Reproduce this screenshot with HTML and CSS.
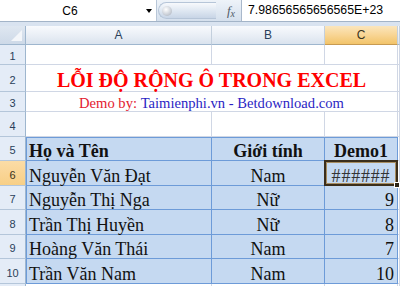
FILE: index.html
```
<!DOCTYPE html>
<html lang="vi">
<head>
<meta charset="utf-8">
<title>Excel</title>
<link rel="stylesheet" href="styles.css">
</head>
<body>
<div class="app">
  <div class="fbar">
    <div class="namebox"><span class="nb-text">C6</span><span class="nb-arrow"></span></div>
    <div class="fmid"><div class="pill"><span class="knob"></span></div><span class="fx"><i>f</i><span class="fxx">x</span></span></div>
    <div class="finput">7.98656565656565E+23</div>
  </div>
  <div class="band"></div>
  <div class="sheet">
    <div class="corner"><svg width="26" height="19" viewBox="0 0 26 19"><polygon points="22,4 22,15 11,15" fill="#f3f6fa"/></svg></div>
    <div class="ch">A</div><div class="ch">B</div><div class="ch on">C</div><div class="ch"></div>

    <div class="rh">1</div><div class="c"></div><div class="c"></div><div class="c"></div><div class="c"></div>

    <div class="rh">2</div><div class="c title">LỖI ĐỘ RỘNG Ô TRONG EXCEL</div><div class="c"></div>

    <div class="rh">3</div><div class="c sub"><span class="red">Demo by:</span>&nbsp;<span class="blue">Taimienphi.vn - Betdownload.com</span></div><div class="c"></div>

    <div class="rh">4</div><div class="c"></div><div class="c"></div><div class="c"></div><div class="c"></div>

    <div class="rh">5</div><div class="t top first b">Họ và Tên</div><div class="t top b mid">Giới tính</div><div class="t top b mid">Demo1</div><div class="c"></div>

    <div class="rh on">6</div><div class="t first">Nguyễn Văn Đạt</div><div class="t mid">Nam</div><div class="t mid active">######<span class="sel"><span class="handle"></span></span></div><div class="c"></div>

    <div class="rh">7</div><div class="t first">Nguyễn Thị Nga</div><div class="t mid">Nữ</div><div class="t num">9</div><div class="c"></div>

    <div class="rh">8</div><div class="t first">Trần Thị Huyền</div><div class="t mid">Nữ</div><div class="t num">8</div><div class="c"></div>

    <div class="rh">9</div><div class="t first">Hoàng Văn Thái</div><div class="t mid">Nam</div><div class="t num">7</div><div class="c"></div>

    <div class="rh">10</div><div class="t first">Trần Văn Nam</div><div class="t mid">Nam</div><div class="t num">10</div><div class="c"></div>

    <div class="rh"></div><div class="c"></div><div class="c"></div><div class="c"></div><div class="c"></div>
  </div>
</div>
</body>
</html>
```
FILE: styles.css
```
* { box-sizing: border-box; }
html, body { margin: 0; padding: 0; }
body { width: 400px; height: 286px; overflow: hidden; background: #fff; }
.app { width: 400px; height: 286px; overflow: hidden; }

.fbar {
  display: flex;
  height: 22px;
  border-bottom: 1px solid #a3b4c8;
  background: linear-gradient(#eef3f9, #d5e0ed);
}
.namebox {
  width: 157px;
  display: flex;
  align-items: center;
  background: #fff;
  border-right: 1px solid #b9c7d8;
}
.nb-text {
  width: 140px;
  text-align: center;
  font: 12px "Liberation Sans", Arial, sans-serif;
  color: #000;
}
.nb-arrow {
  width: 0; height: 0;
  margin-left: 6px;
  border-left: 3.5px solid transparent;
  border-right: 3.5px solid transparent;
  border-top: 4px solid #000;
}
.fmid {
  width: 84px;
  display: flex;
  align-items: center;
}
.pill {
  width: 58px;
  height: 17px;
  margin-left: 1px;
  border: 1px solid #b6c5d8;
  border-right: none;
  border-radius: 9px 0 0 9px;
  background: linear-gradient(#f7f9fc, #dde6f1 55%, #c8d5e6);
  display: flex;
  align-items: center;
}
.knob {
  width: 10px; height: 10px;
  margin-left: 3px;
  border-radius: 50%;
  background: radial-gradient(circle at 40% 35%, #ffffff, #c9ced6 60%, #9ea6b2);
}
.fx {
  margin-left: auto;
  margin-right: 6px;
  font: italic 13px "Liberation Serif", serif;
  color: #505a66;
  line-height: 1;
}
.fxx { font-size: 10px; position: relative; top: 2px; }
.finput {
  flex: 1;
  background: #fff;
  border-left: 1px solid #a9b8cb;
  padding-left: 6px;
  font: 12.3px/21px "Liberation Sans", Arial, sans-serif;
  color: #000;
  white-space: nowrap;
}
.band { height: 4px; background: #d9e3f0; }

.sheet {
  display: grid;
  grid-template-columns: 26px 186px 113px 73px 1fr;
  grid-template-rows: 19px 20px 27px 20px 25px 24px 25px 24px 25px 24px 25px 24px;
  font-family: "Liberation Serif", "Times New Roman", serif;
}
.corner {
  background: linear-gradient(#dfe7f1, #cdd9e8);
  border-right: 1px solid #9eb6ce;
  border-bottom: 1px solid #9eb6ce;
}
.corner svg { display: block; }
.ch {
  background: linear-gradient(#f8fafd, #eaeff6 50%, #dae3ee);
  border-right: 1px solid #c3cfdd;
  border-bottom: 1px solid #9eb6ce;
  font: 12px "Liberation Sans", Arial, sans-serif;
  color: #2a3f5a;
  display: flex;
  align-items: center;
  justify-content: center;
}
.ch.on {
  background: linear-gradient(#fbe6bd, #f8d594 50%, #f2c46a);
  border-bottom-color: #c79a52;
  color: #3a3320;
}
.rh {
  background: #e4ecf7;
  border-right: 1px solid #9eb6ce;
  border-bottom: 1px solid #b4c6da;
  font: 11px "Liberation Sans", Arial, sans-serif;
  color: #2a3f5a;
  display: flex;
  align-items: center;
  justify-content: center;
  padding-top: 3px;
}
.rh.on { background: linear-gradient(#fbdca6, #f8cf86); color: #3a3320; }
.c {
  background: #fff;
  border-right: 1px solid #d0d7e5;
  border-bottom: 1px solid #d0d7e5;
}
.title {
  grid-column: 2 / 5;
  display: flex;
  align-items: flex-end;
  justify-content: center;
  font-family: "Liberation Serif", "Times New Roman", serif;
  font-weight: bold;
  font-size: 20px;
  line-height: 22px;
  color: #ff0000;
  white-space: nowrap;
}
.sub {
  grid-column: 2 / 5;
  display: flex;
  align-items: flex-end;
  justify-content: center;
  font-family: "Liberation Serif", "Times New Roman", serif;
  font-size: 14.6px;
  line-height: 16px;
  white-space: nowrap;
}
.red { color: #e3202f; }
.blue { color: #2b1fc4; }

.t {
  background: #c5d9f1;
  border-right: 1px solid #6d9bd8;
  border-bottom: 1px solid #6d9bd8;
  font-size: 18px;
  line-height: 17px;
  color: #111;
  display: flex;
  align-items: flex-end;
  white-space: nowrap;
}
.t.top { border-top: 1px solid #6d9bd8; }
.t.first { border-left: 1px solid #6d9bd8; padding-left: 2px; }
.t.b { font-weight: bold; }
.t.mid { justify-content: center; }
.t.num { justify-content: flex-end; padding-right: 3px; }
.active { position: relative; letter-spacing: 0.8px; color: #333; }
.sel {
  position: absolute;
  left: -1px; top: -1px; right: -1px; bottom: -1px;
  border: 2px solid #3a2e1c;
  box-shadow: inset 0 0 0 1px #a88d60;
}
.handle {
  position: absolute;
  right: -4px; bottom: -4px;
  width: 6px; height: 6px;
  background: #2a2418;
  border: 1px solid #fff;
}
```
